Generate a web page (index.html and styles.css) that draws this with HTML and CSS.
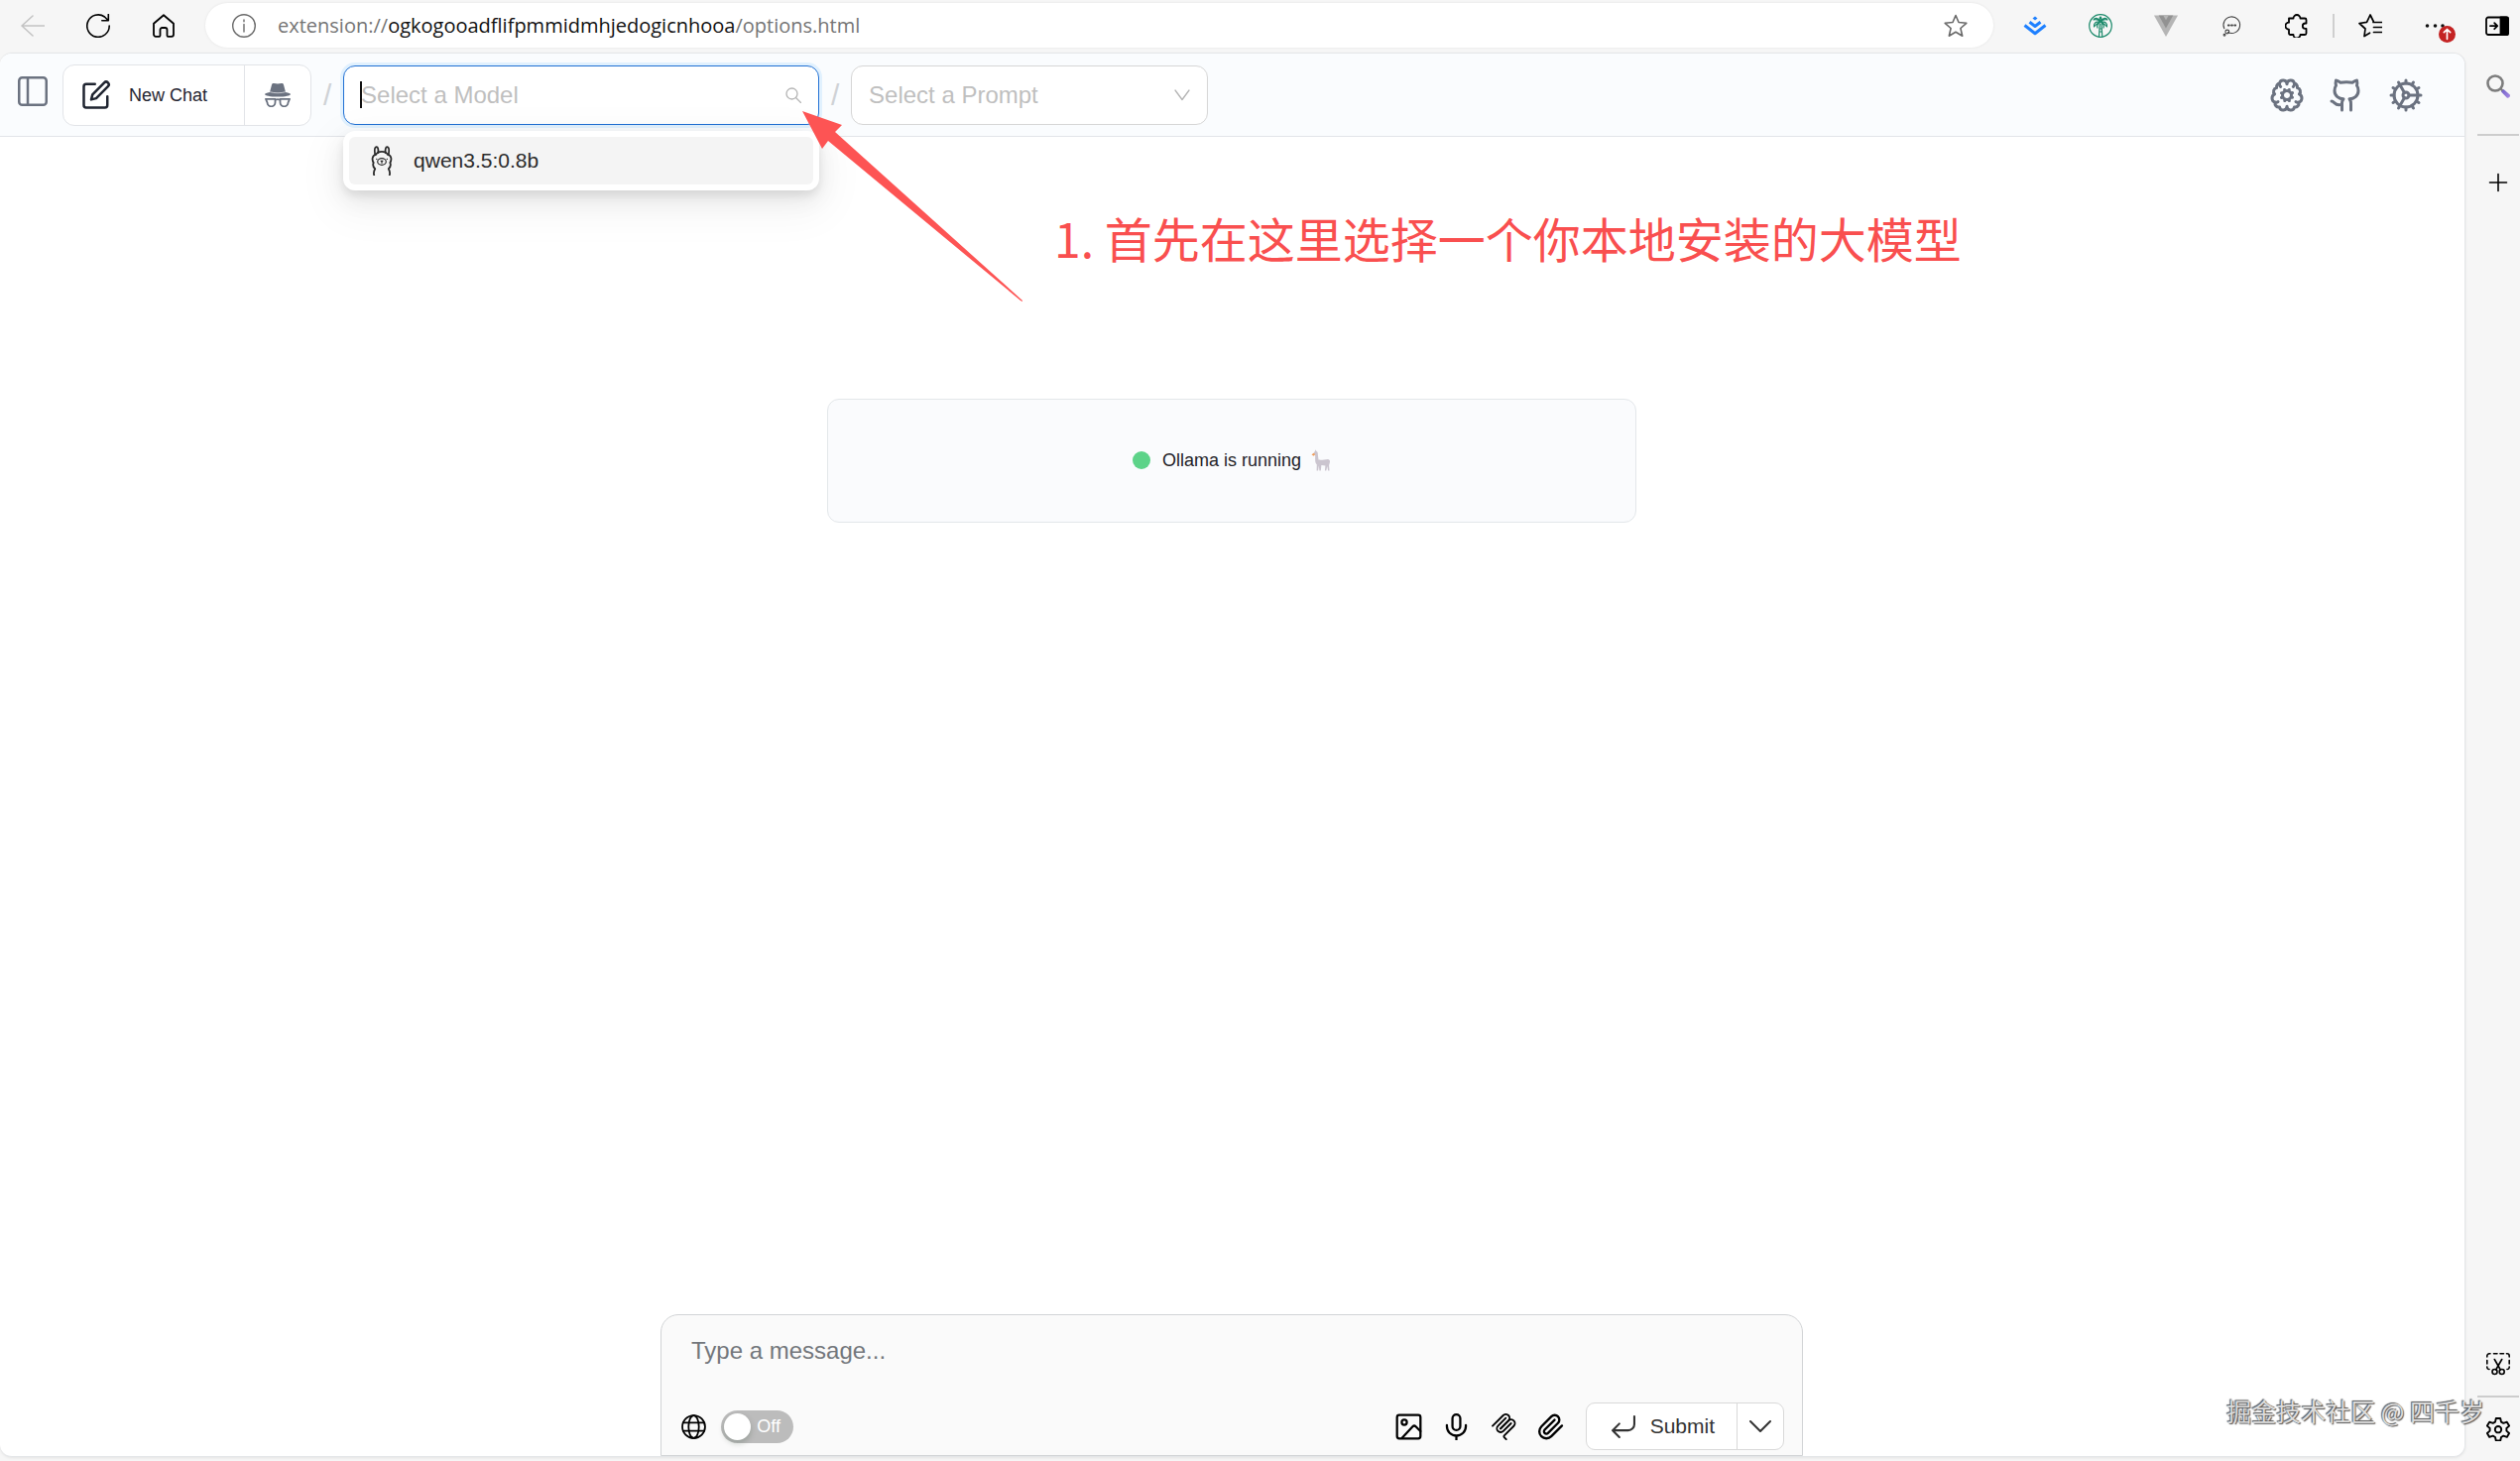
FILE: index.html
```html
<!DOCTYPE html>
<html lang="en">
<head>
    <meta charset="UTF-8">
    <meta name="viewport" content="width=device-width, initial-scale=1.0">
    <title>New Chat</title>
    <link rel="stylesheet" href="styles.css">
</head>
<body>
    <div class="browser">
        <!-- Browser toolbar -->
        <div class="toolbar">
            <div class="toolbar-nav">
                <button class="tool disabled" aria-label="Back" disabled>
                    <svg viewBox="0 0 24 24"><path d="M24 12H1M12 2 1 12l11 10"/></svg>
                </button>
                <button class="tool" aria-label="Refresh">
                    <svg viewBox="0 0 24 24" stroke-width="1.6"><path d="M23.200 12A11.200 11.200 0 1 1 18.500 3L22 6.500M22.300 .5v6.300h-6.500"/></svg>
                </button>
                <button class="tool" aria-label="Home">
                    <svg viewBox="0 0 24 24" stroke-width="1.8"><path d="M2 9.800 12 1.200l10 8.600v11a2 2 0 0 1-2 2h-3.500a1 1 0 0 1-1-1V16a2 2 0 0 0-2-2h-3a2 2 0 0 0-2 2v5.800a1 1 0 0 1-1 1H4a2 2 0 0 1-2-2z"/></svg>
                </button>
            </div>
            <div class="address">
                <button class="tool grey" aria-label="Site information">
                    <svg viewBox="0 0 24 24" stroke-width="1.4"><circle cx="12" cy="12" r="11.300"/><path d="M12 10.500V18M12 6v1.800"/></svg>
                </button>
                <div class="url" contenteditable="true" role="textbox" aria-label="Address" spellcheck="false">extension://<b>ogkogooadflifpmmidmhjedogicnhooa</b>/options.html</div>
                <button class="tool grey" aria-label="Add to favorites">
                    <svg viewBox="0 0 24 24" stroke-width="1.6"><path d="m12 1.500 3 7 7.800.8-5.900 5.200 1.800 7.700-6.700-4-6.700 4 1.800-7.700L1.200 9.300 9 8.500z"/></svg>
                </button>
            </div>
            <div class="toolbar-ext">
                <button class="tool" aria-label="Juejin">
                    <svg viewBox="0 0 24 24" stroke="#1e80ff" stroke-width="3" stroke-linecap="butt"><path d="m1.500 11.500 10.500 8.300 10.500-8.300M6.500 8.200l5.500 4.300 5.500-4.300"/><path d="m12 2.500 2.500 2-2.500 2-2.500-2z" fill="#1e80ff" stroke="none"/></svg>
                </button>
                <button class="tool" aria-label="Palm">
                    <svg viewBox="0 0 24 24" stroke="#1c8a6b" stroke-width="1.2"><circle cx="12" cy="12" r="11.300"/><path d="M12 8C9 3 6 4 5 6c3-1 5 0 7 2zM12 8c3-5 6-4 7-2-3-1-5 0-7 2zM12 8c-5-1-7 2-6.500 5C7 11 9 9 12 8zM12 8c5-1 7 2 6.500 5C17 11 15 9 12 8zM12 8c-3 2-4 4-3 6M12 8c3 2 4 4 3 6M12 8c-1-2-1-4 0-5 1 1 1 3 0 5zM11.300 10 10.500 23M13 10l.800 13M11 15h2M11 18h2.500"/></svg>
                </button>
                <button class="tool" aria-label="Vue devtools">
                    <svg viewBox="0 0 24 24" stroke="none"><path fill="#b5b5b5" d="M0 1.500h24L12 23z"/><path fill="#929292" d="M4.700 1.500h14.600L12 14.500z"/><path fill="#b5b5b5" d="M9.200 1.500h5.600L12 6.300z"/></svg>
                </button>
                <button class="tool" aria-label="Page assistant">
                    <svg viewBox="0 0 24 24" stroke="#444" stroke-width="1.100"><path d="M8.500 18.600A8.300 8.300 0 1 0 4.800 14.800"/><circle cx="7.800" cy="18" r="1.900"/><circle cx="5" cy="21.200" r=".900"/><path d="M8.800 11.500h1M12 11.500h1M15.200 11.500h1" stroke-width="1.800"/></svg>
                </button>
                <button class="tool" aria-label="Extensions">
                    <svg viewBox="0 0 24 24" stroke-width="1.800"><path d="M4 4.500h4.500a3.500 3.500 0 0 1 7 0H20a1.500 1.500 0 0 1 1.500 1.500v3.500h-1a2.700 2.700 0 0 0 0 5.400h1v4.600A1.500 1.500 0 0 1 20 21h-4.500a3.500 3.500 0 0 1-7 0H5.500A1.500 1.500 0 0 1 4 19.500v-3.800a3.500 3.500 0 0 1 0-7z"/></svg>
                </button>
            </div>
            <span class="toolbar-line"></span>
            <div class="toolbar-menu">
                <button class="tool" aria-label="Favorites">
                    <svg viewBox="0 0 24 24" stroke-width="1.700"><path d="M6 22.500 7 15 1 9.500l7.500-1.200L12 1l3.200 6.500M6 22.500l5.500-3.300M15 8.500h9M15.500 13.500H24M15.500 18.500H24"/></svg>
                </button>
                <button class="tool" aria-label="Settings and more">
                    <svg viewBox="0 0 24 24" stroke="none"><g fill="#111"><circle cx="5.500" cy="12" r="1.800"/><circle cx="13.500" cy="12" r="1.800"/><circle cx="21" cy="12" r="1.800"/></g></svg>
                    <svg class="badge" viewBox="0 0 16 16" stroke="#fff" stroke-width="1.600"><circle cx="8" cy="8" r="8" fill="#c42323" stroke="none"/><path d="M8 12.500v-9M5 6.300l3-3 3 3"/></svg>
                </button>
                <button class="tool" aria-label="Hide sidebar">
                    <svg viewBox="0 0 24 24" stroke-width="1.800"><rect x="1" y="3.500" width="22" height="17.500" rx="2"/><path fill="#000" d="M15.500 3.500H22a1 1 0 0 1 1 1V20a1 1 0 0 1-1 1h-6.500z"/><path d="M5 12.200h7M9.200 9.200l3 3-3 3"/></svg>
                </button>
            </div>
        </div>

        <div class="window">
            <main class="page">
                <header class="header">
                    <button class="panel-btn" aria-label="Toggle sidebar">
                        <svg viewBox="0 0 24 24"><rect x="1" y="1" width="22" height="22" rx="2.500"/><path d="M8 1v22"/></svg>
                    </button>
                    <div class="chat-group">
                        <button class="new-chat">
                            <svg viewBox="0 0 24 24"><path d="M11 3H4a2 2 0 0 0-2 2v15a2 2 0 0 0 2 2h15a2 2 0 0 0 2-2v-7"/><path d="M18.500 1.900a2.100 2.100 0 0 1 3 3L12 14.500 8 15.500l1-4z"/></svg>
                            <span>New Chat</span>
                        </button>
                        <button class="incognito" aria-label="Temporary chat">
                            <svg viewBox="0 0 26 24"><path fill="#6b7280" stroke="none" d="M7 1.500C7.400.3 8 0 9.300.1L13 .6l3.700-.5c1.300-.1 1.900.2 2.300 1.400l2 7.500c3 .6 5 1.300 5 2 0 1.500-5.500 2.600-13 2.600S0 12.500 0 11c0-.7 2-1.400 5-2z"/><path stroke="#dfe1e5" stroke-width=".8" d="M5.500 8.800c4 1.300 11 1.300 15 0"/><path stroke="#6b7280" stroke-width="1.800" d="M1 15.800h9.500v3.500a4 4 0 0 1-8 0zM25 15.800h-9.500v3.500a4 4 0 0 0 8 0zM10.500 17c1.500-1 3.500-1 5 0"/></svg>
                        </button>
                    </div>
                    <span class="slash">/</span>
                    <div class="model">
                        <input class="model-input" type="text" role="combobox" aria-label="Select a Model" aria-expanded="true" aria-controls="models" placeholder="Select a Model">
                        <span class="caret"></span>
                        <svg class="field-icon" viewBox="0 0 16 16" stroke-width="1.300"><circle cx="6.500" cy="6.500" r="5.500"/><path d="m10.500 10.500 5 5"/></svg>
                        <ul class="model-list" id="models" role="listbox">
                            <li class="model-option" role="option" aria-selected="true">
                                <svg viewBox="0 0 22 30" stroke-width="1.800"><path d="M3.200 29.500c-.8-3 .2-5 1-6.300-2-2-2.600-4-1.500-6.200C.9 14.300 1 9.500 5.200 8.800 7 5 15 5 16.800 8.800c4.200.7 4.300 5.500 2.500 8.200 1.100 2.200.5 4.200-1.500 6.200.8 1.300 1.800 3.300 1 6.300"/><path d="M4.200 9C3.500 5 4 1.500 5.500 1.200 7.300 1 7.600 4 7.400 7M17.800 9c.7-4 .2-7.500-1.300-7.800C14.700 1 14.400 4 14.600 7"/><ellipse cx="11" cy="16" rx="4.300" ry="3.300" stroke-width="1.200"/><path d="M10.200 15.200l.8.600.8-.6M11 15.800v1.400M5.700 13.300h.2M16.200 13.300h.2" stroke-width="1.300"/></svg>
                                <span>qwen3.5:0.8b</span>
                            </li>
                        </ul>
                    </div>
                    <span class="slash">/</span>
                    <div class="prompt">
                        <select class="prompt-select" aria-label="Select a Prompt">
                            <option>Select a Prompt</option>
                        </select>
                        <svg class="field-icon" viewBox="0 0 16 16" stroke-width="1.300"><path d="m1 3 7 9.500L15 3"/></svg>
                    </div>
                    <nav class="header-links">
                        <a href="#" aria-label="Model settings">
                            <svg viewBox="0 0 24 24"><path d="M12 4.500a2.500 2.500 0 0 0-4.960-.460 2.500 2.500 0 0 0-1.980 3 2.500 2.500 0 0 0-1.320 4.240 3 3 0 0 0 .340 5.580 2.500 2.500 0 0 0 2.960 3.080A2.500 2.500 0 0 0 12 19.500a2.500 2.500 0 0 0 4.960.440 2.500 2.500 0 0 0 2.960-3.080 3 3 0 0 0 .340-5.580 2.500 2.500 0 0 0-1.320-4.240 2.500 2.500 0 0 0-1.980-3A2.500 2.500 0 0 0 12 4.500"/><circle cx="12" cy="12" r="3"/><path d="m15.700 10.400-.9.4M9.200 13.200l-.9.4M13.600 15.700l-.4-.9M10.800 9.200l-.4-.9M15.700 13.500l-.9-.4M9.200 10.900l-.9-.4M10.500 15.700l.4-.9M13.100 9.200l.4-.9M7 4.500q0 1.200.8 1.800M17 4.500q0 1.200-.8 1.800M4 16.800q1.200.3 2-.4M20 16.800q-1.200.3-2-.4"/></svg>
                        </a>
                        <a href="#" aria-label="GitHub">
                            <svg viewBox="0 0 24 24"><path d="M15 22v-4a4.800 4.800 0 0 0-1-3.500c3 0 6-2 6-5.500.080-1.250-.270-2.480-1-3.500.280-1.150.280-2.350 0-3.500 0 0-1 0-3 1.500-2.640-.5-5.360-.5-8 0C6 2 5 2 5 2c-.3 1.150-.3 2.350 0 3.500A5.400 5.400 0 0 0 4 9c0 3.500 3 5.500 6 5.500-.390.490-.680 1.050-.850 1.650-.170.600-.220 1.230-.150 1.850v4"/><path d="M9 18c-4.510 2-5-2-7-2"/></svg>
                        </a>
                        <a href="#" aria-label="Settings">
                            <svg viewBox="0 0 24 24"><circle cx="12" cy="12" r="8"/><circle cx="12" cy="12" r="2"/><path d="M12 2v2M12 22v-2M17 20.660l-1-1.730M11 10.270 7 3.340M20.660 17l-1.730-1M3.340 7l1.730 1M14 12h8M2 12h2M20.660 7l-1.730 1M3.340 17l1.730-1M17 3.340l-1 1.730M11 13.730l-4 6.930"/></svg>
                        </a>
                    </nav>
                </header>

                <section class="chat">
                    <div class="status">
                        <span class="status-dot"></span>
                        <p>Ollama is running</p>
                        <svg class="llama" viewBox="0 0 20 22" stroke="none"><path fill="#cbc5cf" d="M2.500 4 4 1.800l.5-1.500.9 1.600C6.800 2.500 7 4 6.900 6l.6 4.500c3 .5 6-.3 9.500-.6 2 .2 2.300 2 1.800 3.600l-.7 2.500.4 5.500h-1.400l-.8-4.500-1 4.500h-1.400l.5-5-4-.4-.6 5.400H8.400l-.6-5-.7 5H5.600l.2-6C4 14 4 11 4.200 6.500z"/><path fill="#f0a060" d="M.5 5.500 2.500 3.800 4.200 5 2.800 6.700z"/></svg>
                    </div>

                    <form class="composer">
                        <textarea class="message" rows="1" aria-label="Message" placeholder="Type a message..."></textarea>
                        <div class="composer-row">
                            <div class="search-toggle">
                                <svg class="icon" viewBox="0 0 24 24" stroke-width="1.700"><circle cx="12" cy="12" r="11"/><ellipse cx="12" cy="12" rx="5" ry="11"/><path d="M2 8h20M2 16h20"/></svg>
                                <label class="switch">
                                    <input type="checkbox" aria-label="Search internet">
                                    <span>Off</span>
                                </label>
                            </div>
                            <div class="composer-actions">
                                <button type="button" class="action" aria-label="Attach image">
                                    <svg viewBox="0 0 24 24"><rect x="1.500" y="1.500" width="21" height="21" rx="2"/><circle cx="8" cy="8" r="2.300"/><path d="M6 22 15.500 11.800a2 2 0 0 1 2.800 0L22.500 16"/></svg>
                                </button>
                                <button type="button" class="action" aria-label="Voice input">
                                    <svg viewBox="0 0 24 24"><rect x="8.500" y="1" width="7" height="14" rx="3.500"/><path d="M3.500 10.500v1a8.500 8.500 0 0 0 17 0v-1M12 20v4"/></svg>
                                </button>
                                <button type="button" class="action" aria-label="MCP tools">
                                    <svg viewBox="8 4 166 172" stroke-width="12"><path d="M18 84.850 85.880 16.970c9.370-9.370 24.570-9.370 33.940 0 9.370 9.370 9.370 24.570 0 33.940L68.560 102.180"/><path d="m69.270 101.470 50.550-50.560c9.370-9.370 24.570-9.370 33.940 0l.36.360c9.370 9.370 9.370 24.570 0 33.940L92.720 146.600c-3.120 3.120-3.120 8.190 0 11.310l12.610 12.610"/><path d="M102.850 33.940 52.650 84.150c-9.370 9.370-9.370 24.570 0 33.940 9.370 9.370 24.570 9.370 33.940 0l50.200-50.210"/></svg>
                                </button>
                                <button type="button" class="action" aria-label="Attach file">
                                    <svg viewBox="1 1 23 22"><path d="m21.440 11.050-9.190 9.190a6 6 0 0 1-8.490-8.490l8.570-8.570A4 4 0 1 1 18 8.840l-8.590 8.570a2 2 0 0 1-2.830-2.830l8.490-8.480"/></svg>
                                </button>
                                <div class="submit-group">
                                    <button type="submit" class="submit">
                                        <svg viewBox="0 0 24 24"><path d="m8.500 9-6.500 6.500L8.500 22M2 15.500h15a6 6 0 0 0 6-6V2"/></svg>
                                        <span>Submit</span>
                                    </button>
                                    <button type="button" class="submit-more" aria-label="Submit options">
                                        <svg viewBox="0 0 24 24"><path d="m2 7 10 10L22 7"/></svg>
                                    </button>
                                </div>
                            </div>
                        </div>
                    </form>
                </section>
            </main>

            <aside class="sidebar">
                <button class="tool" aria-label="Search">
                    <svg viewBox="0 0 24 24"><defs><linearGradient id="handle" x1="0" y1="0" x2="1" y2="1"><stop offset="0" stop-color="#6f5fc4"/><stop offset="1" stop-color="#a98be6"/></linearGradient></defs><circle cx="9" cy="9" r="7.500" stroke="#7d7d7d" stroke-width="2.600"/><path d="m14.500 14.500 2 2" stroke="#7d7d7d" stroke-width="2.400"/><path d="m15 17.500 2.500-2.500 6.300 5.500c.8 1.600-1 3.800-2.800 3.200z" fill="url(#handle)" stroke="none"/></svg>
                </button>
                <span class="sidebar-line"></span>
                <button class="tool" aria-label="Add app">
                    <svg viewBox="0 0 24 24"><path d="M12 3.500v17M3.500 12h17"/></svg>
                </button>
                <span class="sidebar-space"></span>
                <button class="tool" aria-label="Screenshot">
                    <svg viewBox="0 0 24 24"><path d="M.8 5V4A2.200 2.200 0 0 1 3 1.800h1M7.500 1.800h3.500M14 1.800h3.500M20.500 1.800h.500A2.200 2.200 0 0 1 23.200 4v1M23.200 8.500v3.500M.8 8.500v3.500M.8 15v.500A2 2 0 0 0 3 17.500M23.200 15v.500a2 2 0 0 1-2.200 2M8.300 7.500l6 10.500M15.700 7.500l-6 10.500"/><circle cx="8.500" cy="20" r="2.500"/><circle cx="15.700" cy="20" r="2.500"/></svg>
                </button>
                <span class="sidebar-line"></span>
                <button class="tool" aria-label="Sidebar settings">
                    <svg viewBox="0 0 24 24" stroke-width="1.900"><path d="M9.800 1h4.400l.8 3.600 2.300 1.300 3.500-1.200 2.300 3.900-2.700 2.400v2.600l2.700 2.400-2.300 3.900-3.500-1.200-2.300 1.300-.8 3.500H9.800L9 20l-2.300-1.300-3.500 1.200L.9 16l2.700-2.400V11L.9 8.600l2.300-3.900 3.500 1.200L9 4.600z"/><circle cx="12" cy="12.200" r="3.200"/></svg>
                </button>
            </aside>
        </div>
    </div>

    <!-- Tutorial notes on top of the page -->
    <svg class="note-arrow" viewBox="0 0 222 192" stroke="none"><path fill="#fd5454" d="M0 0l40 14-7 7 189 170v1l-2-1L26 30l-6 8z"/></svg>
    <p class="note">1. 首先在这里选择一个你本地安装的大模型</p>
    <p class="watermark">掘金技术社区 @ 四千岁</p>
</body>
</html>
```

FILE: styles.css
```css
* {
    box-sizing: border-box;
}
body {
    position: relative;
    margin: 0;
    font-family: "Liberation Sans", Arial, sans-serif;
    font-size: 18px;
    color: #1f2328;
    background-color: #f6f6f6;
}
button {
    margin: 0;
    padding: 0;
    border: none;
    background: none;
    font: inherit;
    color: inherit;
    cursor: pointer;
}
p {
    margin: 0;
}
svg {
    display: block;
    flex: none;
    fill: none;
    stroke-linejoin: round;
}
svg:not([stroke]) {
    stroke: currentColor;
}
svg:not([stroke-linecap]) {
    stroke-linecap: round;
}
svg:not([stroke-width]) {
    stroke-width: 2;
}
.browser {
    display: flex;
    flex-direction: column;
    min-height: 100vh;
}

/* toolbar */
.toolbar {
    display: flex;
    align-items: center;
    padding: 3px 11px 5px 21px;
}
.toolbar-nav, .toolbar-ext {
    display: flex;
    gap: 42px;
}
.toolbar-menu {
    display: flex;
    gap: 40px;
}
.toolbar-line {
    width: 2px;
    height: 24px;
    margin: 0 24px;
    background-color: #cfcfcf;
}
.tool {
    position: relative;
    width: 24px;
    height: 24px;
    flex: none;
    color: #000;
}
.tool svg {
    width: 24px;
    height: 24px;
}
.tool svg:not([stroke-width]) {
    stroke-width: 1.6;
}
.tool.disabled {
    color: #c4c4c4;
}
.tool.grey {
    color: #6a6a6a;
}
.tool .badge {
    position: absolute;
    top: 12px;
    left: 17px;
    width: 17px;
    height: 17px;
}
.address {
    flex: 1;
    display: flex;
    align-items: center;
    height: 45px;
    margin: 0 30px;
    padding: 0 26px 0 27px;
    border-radius: 23px;
    background-color: #fff;
    box-shadow: 0 0 3px rgba(0, 0, 0, 0.08);
}
.url {
    flex: 1;
    margin-left: 22px;
    font-family: "Open Sans", "Noto Sans", sans-serif;
    font-size: 20px;
    line-height: 28px;
    color: #757575;
    outline: none;
}
.url b {
    font-weight: 400;
    color: #111;
}

/* window */
.window {
    flex: 1;
    display: flex;
}
.page {
    flex: 1;
    display: flex;
    flex-direction: column;
    margin-bottom: 4px;
    border: 1px solid #e4e6e8;
    border-left: none;
    border-radius: 12px;
    background-color: #fff;
    box-shadow: 0 1px 3px rgba(0, 0, 0, 0.08);
}
.header {
    display: flex;
    align-items: center;
    gap: 12px;
    padding: 11px 41px 10px 18px;
    border-bottom: 1px solid #e2e5e9;
    border-radius: 12px 12px 0 0;
    background-color: #fafcfe;
}
.panel-btn {
    align-self: flex-start;
    margin: 12px 3px 0 0;
    color: #6b7280;
}
.panel-btn svg {
    width: 30px;
    height: 30px;
}
.chat-group {
    display: flex;
    height: 62px;
    border: 1px solid #e2e4e8;
    border-radius: 12px;
    background-color: #fff;
}
.new-chat {
    display: flex;
    align-items: center;
    gap: 18px;
    padding: 0 37px 0 18px;
    border-right: 1px solid #e2e4e8;
    color: #1f2430;
}
.new-chat svg {
    width: 30px;
    height: 30px;
}
.incognito {
    padding: 0 20px;
}
.incognito svg {
    width: 26px;
    height: 24px;
}
.slash {
    width: 8px;
    font-size: 30px;
    color: #cfd2d6;
}
.model, .prompt {
    position: relative;
    height: 60px;
}
.model {
    width: 480px;
}
.prompt {
    width: 360px;
}
.model-input, .prompt-select {
    width: 100%;
    height: 100%;
    padding: 0 17px;
    border: 1px solid #d6d6d6;
    border-radius: 12px;
    outline: none;
    background-color: #fff;
    font: inherit;
    font-size: 24px;
    color: #bfbfbf;
}
.model-input {
    border-color: #2070d4;
    box-shadow: 0 0 0 3px rgba(5, 145, 255, 0.1);
}
.model-input::placeholder {
    color: #bfbfbf;
    opacity: 1;
}
.prompt-select {
    appearance: none;
    padding-bottom: 2px;
}
.caret {
    position: absolute;
    top: 16px;
    left: 17px;
    width: 2px;
    height: 27px;
    background-color: #111;
}
.field-icon {
    position: absolute;
    top: 22px;
    right: 18px;
    width: 16px;
    height: 16px;
    color: #b4b4b4;
    pointer-events: none;
}
.model-list {
    position: absolute;
    z-index: 1;
    top: 66px;
    left: 0;
    right: 0;
    margin: 0;
    padding: 6px;
    border-radius: 12px;
    background-color: #fff;
    box-shadow: 0 9px 24px rgba(0, 0, 0, 0.08), 0 5px 9px rgba(0, 0, 0, 0.08), 0 14px 42px 12px rgba(0, 0, 0, 0.04);
    list-style: none;
}
.model-option {
    display: flex;
    align-items: center;
    gap: 21px;
    height: 48px;
    padding: 0 22px;
    border-radius: 6px;
    background-color: #f4f4f4;
    font-size: 21px;
    color: #2b2b2b;
}
.model-option svg {
    width: 22px;
    height: 30px;
}
.header-links {
    display: flex;
    gap: 24px;
    margin-left: auto;
    color: #6b7280;
}
.header-links a {
    color: inherit;
}
.header-links svg {
    width: 36px;
    height: 36px;
}

/* chat */
.chat {
    flex: 1;
    display: flex;
    flex-direction: column;
    align-items: center;
    justify-content: space-between;
    padding-top: 264px;
    padding-right: 1px;
}
.status {
    display: flex;
    align-items: center;
    justify-content: center;
    width: 100%;
    max-width: 816px;
    padding: 50px 0 51px;
    border: 1px solid #e3e7ea;
    border-radius: 12px;
    background-color: #fafbfd;
    line-height: 22px;
}
.status-dot {
    width: 18px;
    height: 18px;
    margin-right: 12px;
    border-radius: 50%;
    background-color: #5dd389;
}
.llama {
    width: 20px;
    height: 22px;
    margin-left: 10px;
}
.composer {
    width: 100%;
    max-width: 1152px;
    padding: 18px 18px 5px;
    border: 1px solid #d2d4d6;
    border-radius: 18px 18px 0 0;
    background-color: #fafafa;
}
.message {
    display: block;
    width: 100%;
    height: 70px;
    padding: 3px 12px;
    border: none;
    outline: none;
    resize: none;
    background: none;
    font: inherit;
    font-size: 24px;
    line-height: 30px;
}
.message::placeholder {
    color: #73777c;
}
.composer-row, .search-toggle, .composer-actions {
    display: flex;
    align-items: center;
}
.composer-row {
    justify-content: space-between;
    padding-left: 2px;
}
.search-toggle {
    gap: 15px;
    color: #000;
}
.icon {
    width: 25px;
    height: 25px;
}
.switch {
    position: relative;
    display: flex;
    color: #fff;
}
.switch input {
    appearance: none;
    width: 73px;
    height: 33px;
    margin: 0;
    border-radius: 17px;
    background-color: #bcbcbc;
}
.switch input::before {
    content: "";
    display: block;
    width: 27px;
    height: 27px;
    margin: 3px;
    border-radius: 50%;
    background-color: #fff;
    box-shadow: 0 3px 6px rgba(0, 35, 11, 0.2);
}
.switch span {
    position: absolute;
    top: 6px;
    right: 13px;
}
.composer-actions {
    gap: 21px;
}
.action {
    color: #000;
}
.action svg {
    width: 27px;
    height: 27px;
}
.submit-group {
    display: flex;
    height: 48px;
    border: 1px solid #d9d9d9;
    border-radius: 9px;
    background-color: #fff;
    font-size: 21px;
    color: #333;
}
.submit {
    display: flex;
    align-items: center;
    gap: 15px;
    padding: 0 22px 0 24px;
    border-right: 1px solid #d9d9d9;
}
.submit svg {
    width: 25px;
    height: 25px;
}
.submit-more {
    padding: 0 11px;
}
.submit-more svg {
    width: 24px;
    height: 24px;
}

/* browser sidebar */
.sidebar {
    display: flex;
    flex-direction: column;
    align-items: center;
    width: 55px;
    padding: 22px 1px 20px 11px;
}
.sidebar-line {
    width: 42px;
    height: 2px;
    background-color: #cdcdcd;
}
.sidebar > .tool:first-child {
    margin-bottom: 36px;
}
.sidebar-line + .tool {
    margin-top: 35px;
}
.sidebar-space {
    flex: 1;
}
.sidebar-space ~ .sidebar-line, .sidebar-space ~ .sidebar-line + .tool {
    margin-top: 20px;
}

/* notes */
.note-arrow {
    position: absolute;
    z-index: 2;
    top: 112px;
    left: 809px;
    width: 222px;
    height: 192px;
}
.note {
    position: absolute;
    top: 205px;
    left: 1063px;
    font-family: "Noto Sans CJK SC", sans-serif;
    font-size: 48px;
    line-height: 68px;
    color: #f94f4f;
    white-space: nowrap;
}
.watermark {
    position: absolute;
    right: 36px;
    bottom: 33px;
    font-family: "Noto Sans CJK SC", sans-serif;
    font-size: 25px;
    line-height: 36px;
    color: #dcdcdc;
    text-shadow: -1px -1px 1px #555, 1px 1px 1px #555;
    white-space: nowrap;
}
```
